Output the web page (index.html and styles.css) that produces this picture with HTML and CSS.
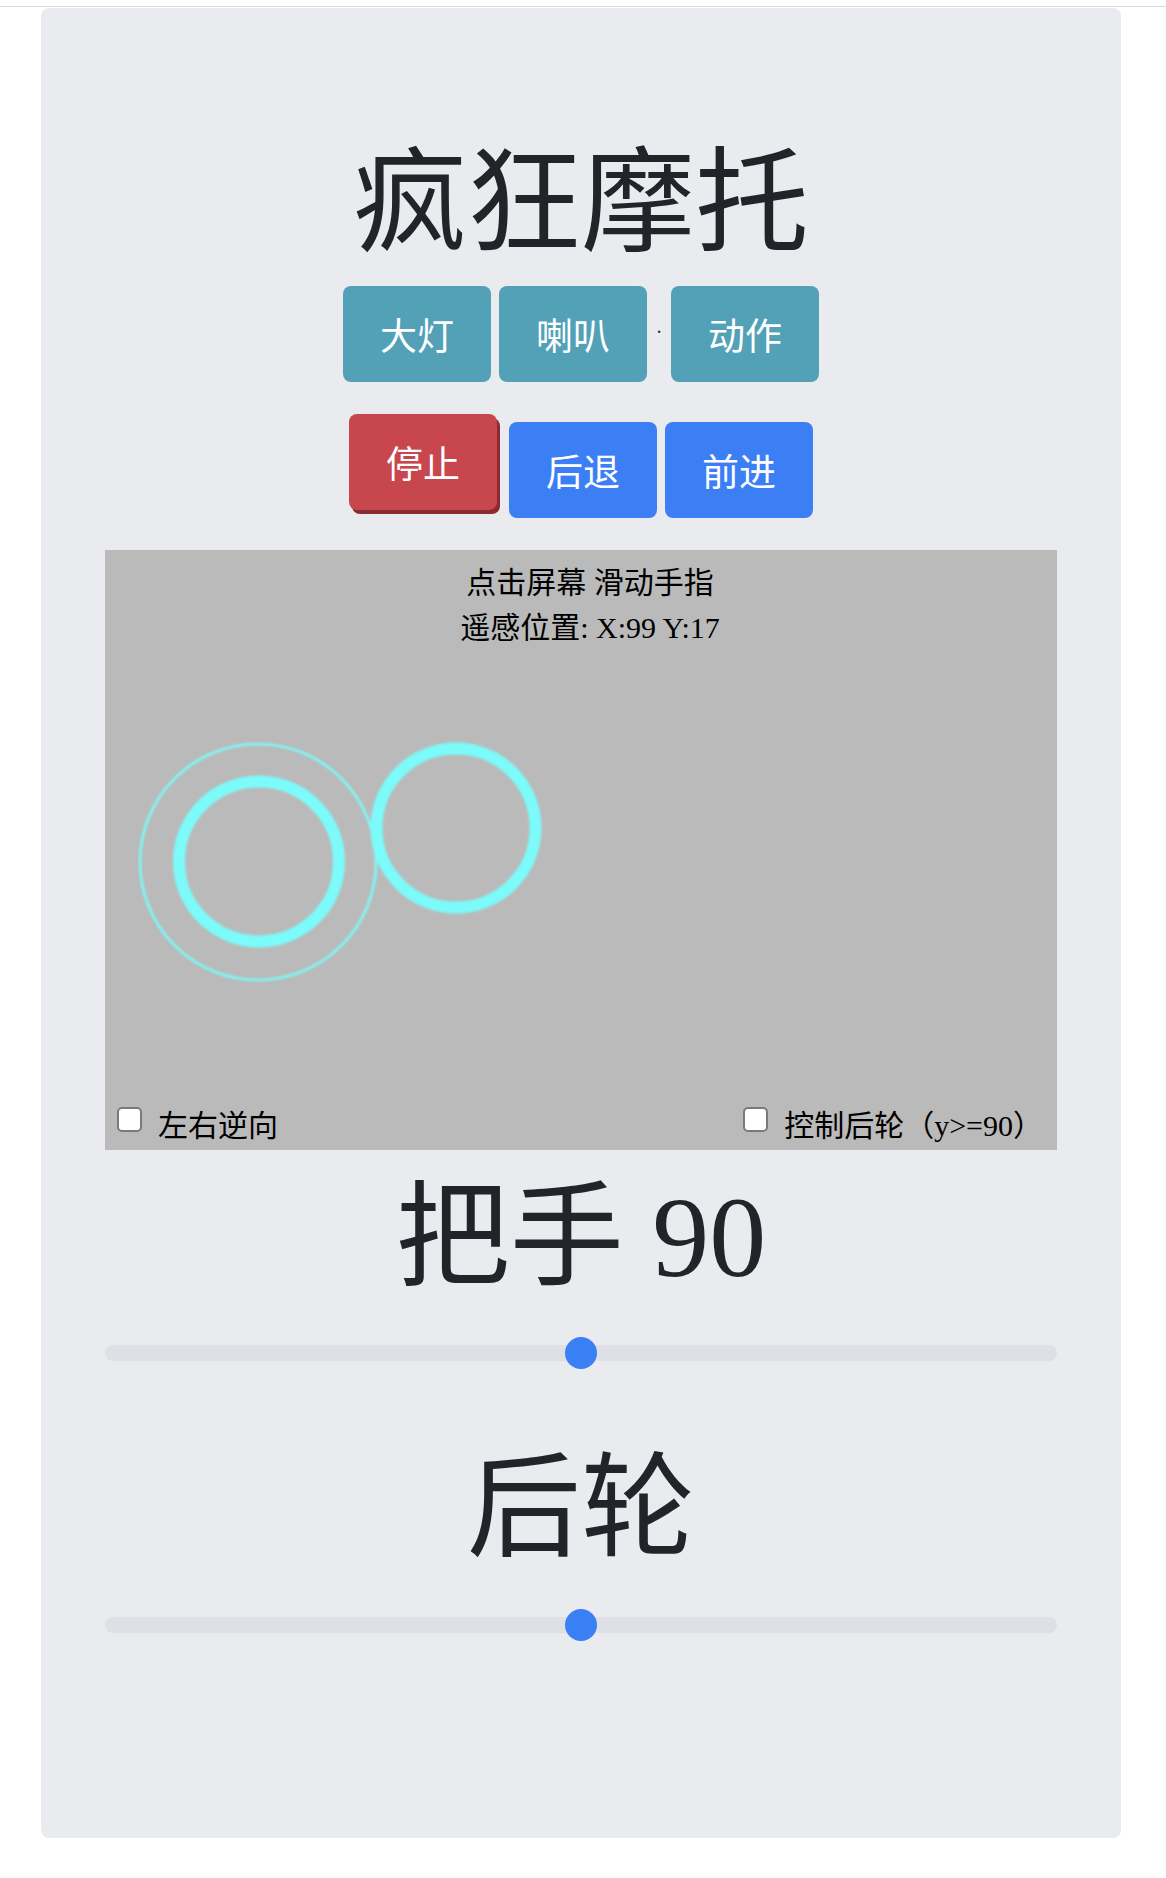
FILE: index.html
```html
<!DOCTYPE html>
<html lang="zh-CN">
<head>
<meta charset="utf-8">
<title>疯狂摩托</title>
<link rel="stylesheet" href="styles.css">
</head>
<body>
<div class="topline"></div>
<main class="card">
  <h1 class="title">疯狂摩托</h1>
  <div class="btn-row">
    <button class="btn teal">大灯</button>
    <button class="btn teal">喇叭</button>
    <span class="dot">·</span>
    <button class="btn teal">动作</button>
  </div>
  <div class="btn-row row2">
    <button class="btn red">停止</button>
    <button class="btn blue">后退</button>
    <button class="btn blue">前进</button>
  </div>
  <div class="pad">
    <svg class="rings" width="952" height="600" viewBox="0 0 952 600">
      <defs>
        <filter id="glow" x="-20%" y="-20%" width="140%" height="140%">
          <feGaussianBlur stdDeviation="0.8"/>
        </filter>
      </defs>
      <g fill="none" stroke="#7cfbfa" filter="url(#glow)">
        <circle cx="153" cy="312" r="118" stroke-width="2.6"/>
        <circle cx="154" cy="311.5" r="80" stroke-width="12"/>
        <circle cx="351" cy="278" r="79.5" stroke-width="12"/>
      </g>
    </svg>
    <div class="pad-info">
      <div>点击屏幕 滑动手指</div>
      <div>遥感位置: X:99 Y:17</div>
    </div>
    <div class="pad-opts">
      <label class="chk"><input type="checkbox"><span>左右逆向</span></label>
      <label class="chk"><input type="checkbox"><span>控制后轮（y&gt;=90）</span></label>
    </div>
  </div>
  <h2 class="value">把手 90</h2>
  <input class="slider" type="range" min="0" max="180" value="90">
  <h2 class="value second">后轮</h2>
  <input class="slider" type="range" min="0" max="180" value="90">
</main>
</body>
</html>
```

FILE: styles.css
```css
html, body {
  margin: 0;
  padding: 0;
  background: #ffffff;
}

body {
  padding-top: 6px;
  font-family: "Liberation Serif", "Noto Sans CJK SC", serif;
  color: #212529;
}

.topline {
  height: 1px;
  background: #d9dadc;
}

.card {
  width: 1080px;
  height: 1830px;
  box-sizing: border-box;
  margin: 1px 0 0 41px;
  background: #eaebef;
  border-radius: 8px;
  padding-top: 128px;
  display: flex;
  flex-direction: column;
  align-items: center;
}

.title,
.value {
  margin: 0;
  font-weight: 400;
  font-size: 114px;
  line-height: 136px;
  color: #212529;
  font-family: "Liberation Serif", "Noto Sans CJK SC", serif;
}

.btn-row {
  display: flex;
  align-items: center;
  gap: 8px;
  margin-top: 14px;
}

.btn-row.row2 {
  margin-top: 40px;
  padding-left: 4px;
}

.btn {
  width: 148px;
  height: 96px;
  border: none;
  border-radius: 8px;
  color: #ffffff;
  font-family: "Liberation Serif", "Noto Sans CJK SC", serif;
  font-size: 37px;
  padding: 0;
  cursor: pointer;
}

.teal { background: #52a1b7; }
.blue { background: #3c7ff4; }
.red {
  background: #c8464e;
  box-shadow: 3px 4px 0 #8a2b31;
  transform: translate(-4px, -8px);
}

.dot {
  width: 8px;
  text-align: center;
  font-size: 20px;
  line-height: 20px;
  color: #333;
  margin-top: -4px;
}

.pad {
  position: relative;
  width: 952px;
  height: 600px;
  margin-top: 32px;
  background: #bababa;
  display: flex;
  flex-direction: column;
  justify-content: space-between;
  color: #000;
  font-size: 30px;
  line-height: 45px;
}

.rings {
  position: absolute;
  left: 0;
  top: 0;
}

.pad-info {
  position: relative;
  padding-top: 10px;
  padding-left: 18px;
  text-align: center;
}

.pad-opts {
  position: relative;
  display: flex;
  justify-content: space-between;
  padding: 0 14px 2px 12px;
}

.chk {
  display: flex;
  align-items: flex-start;
  gap: 16px;
}

.chk input {
  -webkit-appearance: none;
  appearance: none;
  margin: 4px 0 0 0;
  width: 25px;
  height: 25px;
  box-sizing: border-box;
  border: 2px solid #7a7a7a;
  border-radius: 5px;
  background: #ffffff;
}

.value {
  margin-top: 20px;
}

.value.second {
  margin-top: 72px;
}

.slider {
  -webkit-appearance: none;
  appearance: none;
  display: block;
  width: 952px;
  height: 32px;
  margin: 31px 0 0 0;
  padding: 0;
  background: transparent;
}

.value.second + .slider {
  margin-top: 32px;
}

.slider::-webkit-slider-runnable-track {
  height: 16px;
  border-radius: 8px;
  background: #dee0e5;
}

.slider::-webkit-slider-thumb {
  -webkit-appearance: none;
  appearance: none;
  width: 32px;
  height: 32px;
  margin-top: -8px;
  border: none;
  border-radius: 50%;
  background: #3b7ff5;
}
```
